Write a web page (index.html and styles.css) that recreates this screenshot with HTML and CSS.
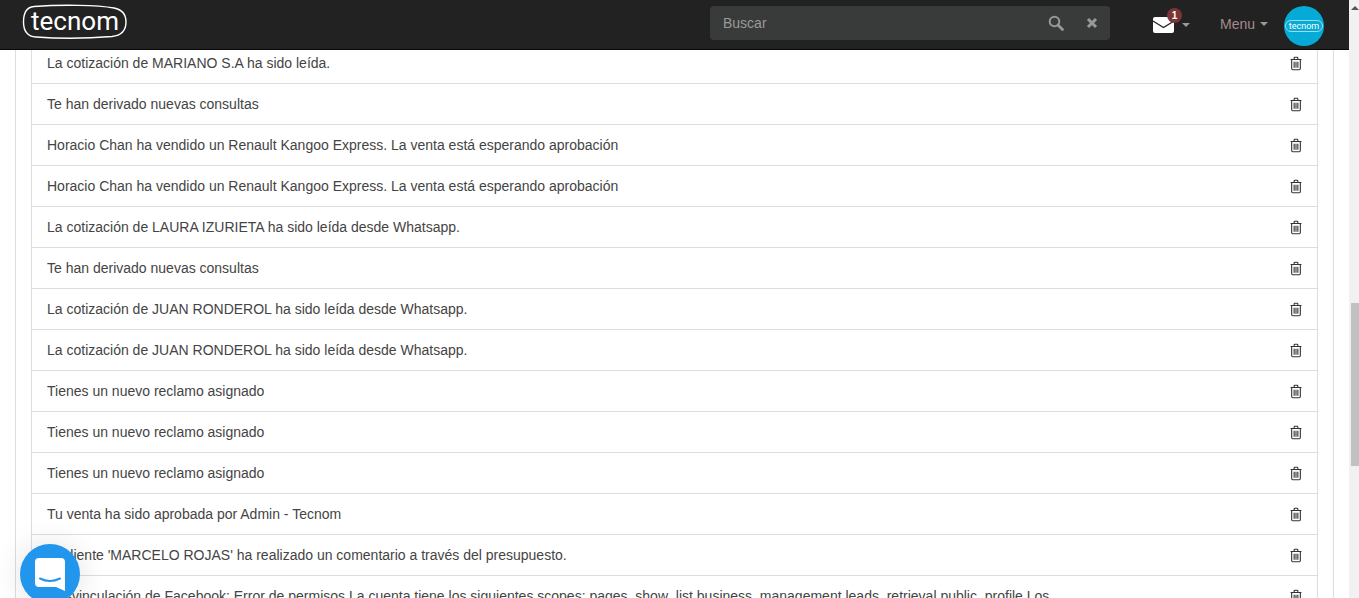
FILE: index.html
```html
<!DOCTYPE html>
<html lang="en">
<head>
    <meta charset="UTF-8">
    <title>Notificaciones</title>
    <link rel="stylesheet" href="styles.css">
</head>
<body>
    <svg class="icon-defs" width="0" height="0">
        <symbol id="trash" viewBox="0 0 13 15">
            <path d="M4.5 3V1.6Q4.5 .8 5.3 .8H7.7Q8.5 .8 8.5 1.6V3M.6 3.2H12.4M1.8 3.2V13Q1.8 14.3 3 14.3H10Q11.2 14.3 11.2 13V3.2M4.5 5.5V12M6.5 5.5V12M8.5 5.5V12" fill="none" stroke="currentColor" stroke-width="1.2"/>
        </symbol>
    </svg>
    <div class="page">
        <div class="main">
            <header class="navbar">
                <svg class="logo" width="106" height="36" viewBox="0 0 106 36">
                    <path d="M12 2.500C40 .5 75 1 92 4C100 5.500 104 10 104 18C104 27 99 31.500 90 32.500C65 34.500 35 34.500 14 33C6 32.500 1.500 27 1.500 18C1.500 9 5 3 12 2.500Z" fill="none" stroke="#fff" stroke-width="1.400"/>
                    <text x="53" y="26" text-anchor="middle" class="logo-text">tecnom</text>
                </svg>
                <div class="search">
                    <span class="search-label">Buscar</span>
                    <svg class="search-icon" width="16" height="16" viewBox="0 0 16 16">
                        <circle cx="6.500" cy="6.500" r="4.800" fill="none" stroke="currentColor" stroke-width="2"/>
                        <path d="M10 10L14.500 14.500" stroke="currentColor" stroke-width="2.600" stroke-linecap="round"/>
                    </svg>
                    <svg class="clear-icon" width="12" height="12" viewBox="0 0 12 12">
                        <path d="M2 2L10 10M10 2L2 10" stroke="currentColor" stroke-width="3"/>
                    </svg>
                </div>
                <div class="mail">
                    <svg width="21" height="16" viewBox="0 0 21 16">
                        <rect width="21" height="16" rx="2" fill="#fff"/>
                        <path d="M0 4L10.500 10.500L21 4" fill="none" stroke="#222" stroke-width="1.200"/>
                    </svg>
                    <span class="badge">1</span>
                    <span class="caret"></span>
                </div>
                <div class="menu">Menu<span class="caret"></span></div>
                <svg class="avatar" width="40" height="40" viewBox="0 0 40 40">
                    <circle cx="20" cy="20" r="20" fill="#05aad6"/>
                    <rect x="1.500" y="14.500" width="37" height="11" rx="5.500" fill="none" stroke="#bfeaf5" stroke-width=".8"/>
                    <text x="20" y="23" text-anchor="middle" class="avatar-text">tecnom</text>
                </svg>
            </header>
            <div class="content">
                <div class="panel">
                    <ul class="list">
                        <li class="row"><span>La cotización de MARIANO S.A ha sido leída.</span><svg class="trash"><use href="#trash"/></svg></li>
                        <li class="row"><span>Te han derivado nuevas consultas</span><svg class="trash"><use href="#trash"/></svg></li>
                        <li class="row"><span>Horacio Chan ha vendido un Renault Kangoo Express. La venta está esperando aprobación</span><svg class="trash"><use href="#trash"/></svg></li>
                        <li class="row"><span>Horacio Chan ha vendido un Renault Kangoo Express. La venta está esperando aprobación</span><svg class="trash"><use href="#trash"/></svg></li>
                        <li class="row"><span>La cotización de LAURA IZURIETA ha sido leída desde Whatsapp.</span><svg class="trash"><use href="#trash"/></svg></li>
                        <li class="row"><span>Te han derivado nuevas consultas</span><svg class="trash"><use href="#trash"/></svg></li>
                        <li class="row"><span>La cotización de JUAN RONDEROL ha sido leída desde Whatsapp.</span><svg class="trash"><use href="#trash"/></svg></li>
                        <li class="row"><span>La cotización de JUAN RONDEROL ha sido leída desde Whatsapp.</span><svg class="trash"><use href="#trash"/></svg></li>
                        <li class="row"><span>Tienes un nuevo reclamo asignado</span><svg class="trash"><use href="#trash"/></svg></li>
                        <li class="row"><span>Tienes un nuevo reclamo asignado</span><svg class="trash"><use href="#trash"/></svg></li>
                        <li class="row"><span>Tienes un nuevo reclamo asignado</span><svg class="trash"><use href="#trash"/></svg></li>
                        <li class="row"><span>Tu venta ha sido aprobada por Admin - Tecnom</span><svg class="trash"><use href="#trash"/></svg></li>
                        <li class="row"><span>El cliente 'MARCELO ROJAS' ha realizado un comentario a través del presupuesto.</span><svg class="trash"><use href="#trash"/></svg></li>
                        <li class="row"><span>Desvinculación de Facebook: Error de permisos La cuenta tiene los siguientes scopes: pages_show_list business_management leads_retrieval public_profile Los</span><svg class="trash"><use href="#trash"/></svg></li>
                    </ul>
                </div>
            </div>
        </div>
        <div class="scrollbar">
            <span class="scroll-arrow"></span>
            <div class="scroll-thumb"></div>
        </div>
    </div>

    <div class="chat-button">
        <svg width="30" height="33" viewBox="0 0 30 33">
            <path d="M4 0H26Q30 0 30 4V33L21 29H4Q0 29 0 25V4Q0 0 4 0Z" fill="#fff"/>
            <path d="M5 20.500Q15 25.500 25 20.500" fill="none" stroke="#2196ec" stroke-width="2" stroke-linecap="round"/>
        </svg>
    </div>
</body>
</html>
```

FILE: styles.css
```css
html, body {
    margin: 0;
    padding: 0;
    height: 598px;
    overflow: hidden;
    background-color: #fff;
    font-family: "Liberation Sans", Arial, sans-serif;
    font-size: 14px;
    color: #444;
}

.icon-defs {
    display: block;
    height: 0;
}

.page {
    display: flex;
    height: 598px;
}

.main {
    flex: 1;
    min-width: 0;
    overflow: hidden;
}

/* Top bar */
.navbar {
    position: relative;
    z-index: 2;
    display: flex;
    align-items: center;
    height: 49px;
    padding: 0 25px 0 22px;
    background-color: #222;
    border-bottom: 1px solid #080808;
}

.logo {
    flex: none;
    margin-top: -6px;
}

.logo-text {
    font-family: Roboto, sans-serif;
    font-size: 26px;
    fill: #fff;
}

.search {
    display: flex;
    align-items: center;
    width: 400px;
    height: 34px;
    box-sizing: border-box;
    margin: -3px 0 0 auto;
    padding: 0 12px 0 13px;
    background-color: #393b3a;
    border-radius: 4px;
    color: #999;
}

.search-label {
    flex: 1;
}

.search-icon {
    margin-right: 22px;
}

.clear-icon {
    margin-right: 0;
}

.mail {
    position: relative;
    display: flex;
    align-items: center;
    margin-left: 43px;
    margin-top: 0;
}

.badge {
    position: absolute;
    top: -9px;
    left: 14px;
    width: 15px;
    height: 15px;
    border-radius: 50%;
    background-color: #7a3535;
    color: #fff;
    font-size: 10px;
    font-weight: bold;
    line-height: 15px;
    text-align: center;
}

.caret {
    display: inline-block;
    width: 0;
    height: 0;
    margin-left: 8px;
    border-top: 4px solid #999;
    border-left: 4px solid transparent;
    border-right: 4px solid transparent;
}

.menu {
    display: flex;
    align-items: center;
    margin-left: 30px;
    margin-top: -2px;
    color: #a58a8e;
}

.menu .caret {
    margin-left: 5px;
}

.avatar {
    flex: none;
    margin-left: 16px;
    margin-top: 3px;
}

.avatar-text {
    font-family: Roboto, sans-serif;
    font-size: 9px;
    fill: #fff;
}

/* Notification list */
.content {
    padding: 0 15px;
}

.panel {
    padding: 0 15px;
    border-left: 1px solid #ddd;
    border-right: 1px solid #ddd;
}

.list {
    list-style: none;
    margin: -7px 0 0;
    padding: 0;
    border-left: 1px solid #ddd;
    border-right: 1px solid #ddd;
}

.row {
    display: flex;
    align-items: center;
    justify-content: space-between;
    height: 40px;
    padding: 0 15px;
    border-bottom: 1px solid #ddd;
}

.trash {
    flex: none;
    width: 12px;
    height: 15px;
    color: #333;
}

/* Scrollbar */
.scrollbar {
    flex: none;
    width: 10px;
    box-sizing: border-box;
    padding-left: 2px;
    background-color: #f1f1f1;
}

.scroll-arrow {
    display: block;
    width: 0;
    height: 0;
    margin: 6px 0 0;
    border-bottom: 4px solid #555;
    border-left: 4px solid transparent;
    border-right: 4px solid transparent;
}

.scroll-thumb {
    height: 163px;
    margin-top: 293px;
    background-color: #c1c1c1;
}

/* Floating chat button */
.chat-button {
    position: fixed;
    left: 20px;
    top: 544px;
    z-index: 3;
    display: flex;
    align-items: center;
    justify-content: center;
    width: 60px;
    height: 60px;
    border-radius: 50%;
    background-color: #2196ec;
    box-shadow: 0 1px 30px rgba(0, 0, 0, 0.12);
}
```
